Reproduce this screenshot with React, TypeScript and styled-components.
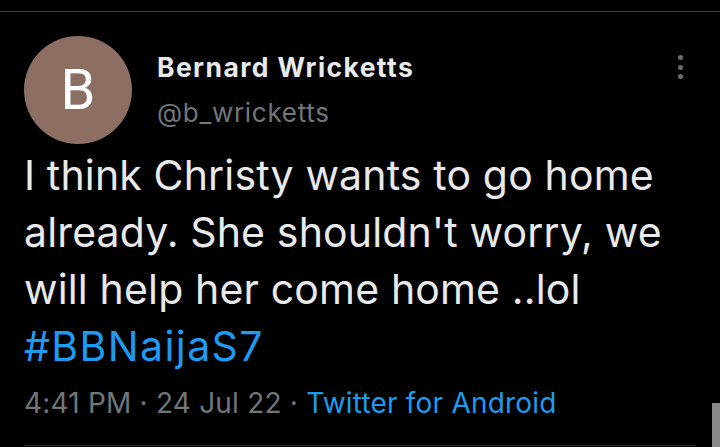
import React from "react";
import styled, { createGlobalStyle } from "styled-components";

const Global = createGlobalStyle`
  html, body {
    margin: 0;
    padding: 0;
    background: #000;
    width: 720px;
    height: 447px;
    overflow: hidden;
  }
  body {
    font-family: Inter, Roboto, "Noto Sans", "Liberation Sans", sans-serif;
    color: #e7e9ea;
  }
`;

const Page = styled.div`
  position: relative;
  width: 720px;
  height: 447px;
  background: #000;
`;

const TopRule = styled.div`
  height: 11px;
  border-bottom: 1px solid #3a3a3a;
`;

const Tweet = styled.article`
  padding: 24px 24px 0 24px;
`;

const Header = styled.header`
  display: flex;
  align-items: flex-start;
`;

const Avatar = styled.div`
  flex: none;
  width: 108px;
  height: 108px;
  border-radius: 50%;
  background: #8d6e63;
  color: #fff;
  display: flex;
  align-items: center;
  justify-content: center;
  font-family: Roboto, sans-serif;
  font-size: 56px;
  font-weight: 400;
  line-height: 1;
`;

const Identity = styled.div`
  flex: 1;
  align-self: center;
  display: flex;
  flex-direction: column;
  margin-left: 25px;
`;

const Name = styled.div`
  font-size: 26.5px;
  font-weight: 700;
  line-height: 45px;
  letter-spacing: 1.4px;
  color: #e7e9ea;
`;

const Handle = styled.div`
  font-size: 26px;
  line-height: 45px;
  letter-spacing: 0.7px;
  color: #71767b;
`;

const More = styled.div`
  flex: none;
  margin-top: 19px;
  margin-right: 13px;
  display: flex;
  flex-direction: column;
  gap: 4.5px;
`;

const Dot = styled.span`
  width: 5px;
  height: 5px;
  border-radius: 50%;
  background: #6e6e6e;
`;

const Body = styled.p`
  margin: 3px 0 0 0;
  font-size: 41px;
  line-height: 57px;
  letter-spacing: 0.15px;
  color: #e7e9ea;
`;

const Hashtag = styled.span`
  color: #1d9bf0;
  letter-spacing: 1.4px;
`;

const Meta = styled.div`
  margin-top: 8px;
  font-size: 28px;
  line-height: 40px;
  letter-spacing: 0.2px;
  color: #71767b;
  padding-bottom: 22px;
  border-bottom: 1px solid #2f3336;
`;

const Source = styled.span`
  color: #1d9bf0;
`;

const ScrollThumb = styled.div`
  position: absolute;
  right: 0;
  bottom: 0;
  width: 8px;
  height: 44px;
  background: #888;
`;

export default function App() {
  return (
    <Page>
      <Global />
      <TopRule />
      <Tweet>
        <Header>
          <Avatar>B</Avatar>
          <Identity>
            <Name>Bernard Wricketts</Name>
            <Handle>@b_wricketts</Handle>
          </Identity>
          <More>
            <Dot />
            <Dot />
            <Dot />
          </More>
        </Header>
        <Body>
          I think Christy wants to go home already. She shouldn't worry, we
          will help her come home ..lol
          <br />
          <Hashtag>#BBNaijaS7</Hashtag>
        </Body>
        <Meta>
          4:41 PM · 24 Jul 22 · <Source>Twitter for Android</Source>
        </Meta>
      </Tweet>
      <ScrollThumb />
    </Page>
  );
}
